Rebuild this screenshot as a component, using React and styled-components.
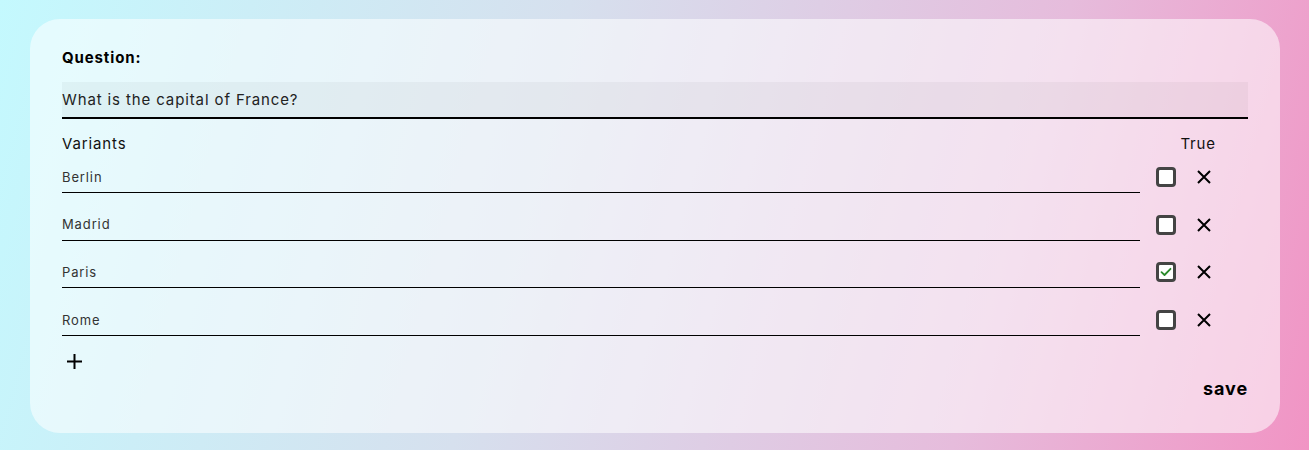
import styled, { createGlobalStyle } from 'styled-components';
import { useState } from 'react';

const GlobalStyle = createGlobalStyle`
  html, body {
    margin: 0;
    padding: 0;
  }
  body {
    font-family: Inter, 'Noto Sans', sans-serif;
    letter-spacing: 0.055em;
    color: #111;
  }
`;

const Page = styled.div`
  width: 100%;
  height: 450px;
  box-sizing: border-box;
  padding: 19px 29px 17px 30px;
  background: linear-gradient(105deg, #c4f9fe 0%, #d6e0ee 40%, #e6bcdc 75%, #f194c4 100%);
`;

const Card = styled.div`
  height: 100%;
  box-sizing: border-box;
  padding: 30px 32px 32px;
  border-radius: 30px;
  background: rgba(255, 255, 255, 0.55);
  display: flex;
  flex-direction: column;
`;

const Label = styled.div`
  font-size: 15px;
  font-weight: 700;
  line-height: 18px;
  color: #000;
`;

const QuestionInput = styled.input`
  margin-top: 15px;
  height: 37px;
  box-sizing: border-box;
  border: none;
  border-bottom: 2px solid #000;
  background: rgba(0, 0, 0, 0.035);
  padding: 0;
  font-family: inherit;
  letter-spacing: inherit;
  font-size: 15px;
  color: #222;
  outline: none;
`;

const Header = styled.div`
  display: flex;
  justify-content: space-between;
  align-items: center;
  margin-top: 15px;
  font-size: 15px;
  line-height: 20px;
  color: #111;
`;

const TrueLabel = styled.span`
  margin-right: 32px;
`;

const List = styled.div`
  display: flex;
  flex-direction: column;
  gap: 15.7px;
  margin-top: 7px;
`;

const Row = styled.div`
  display: flex;
  align-items: center;
`;

const VariantInput = styled.input`
  flex: 1;
  height: 32px;
  box-sizing: border-box;
  border: none;
  border-bottom: 1px solid #000;
  background: transparent;
  padding: 0;
  font-family: inherit;
  letter-spacing: inherit;
  font-size: 13px;
  color: #333;
  outline: none;
`;

const Controls = styled.div`
  width: 108px;
  display: flex;
  align-items: center;
  padding-left: 16px;
  box-sizing: border-box;
  gap: 20px;
`;

const Check = styled.button`
  width: 20px;
  height: 20px;
  box-sizing: border-box;
  border: 3px solid #444;
  border-radius: 4px;
  background: #fff;
  padding: 0;
  display: flex;
  align-items: center;
  justify-content: center;
  cursor: pointer;
`;

const IconButton = styled.button`
  border: none;
  background: none;
  padding: 0;
  display: flex;
  cursor: pointer;
  color: #000;
`;

const AddButton = styled(IconButton)`
  align-self: flex-start;
  margin-top: 17px;
  margin-left: 4px;
`;

const Save = styled.button`
  align-self: flex-end;
  margin-top: 8px;
  border: none;
  background: none;
  padding: 0;
  font-family: inherit;
  letter-spacing: inherit;
  font-size: 18px;
  line-height: 22px;
  font-weight: 700;
  color: #000;
  cursor: pointer;
`;

const CheckMark = () => (
  <svg width="12" height="10" viewBox="0 0 12 10">
    <path d="M1.5 5.2 L4.5 8 L10.5 1.8" fill="none" stroke="#2b8a2b" strokeWidth="1.8" strokeLinecap="round" strokeLinejoin="round" />
  </svg>
);

const Cross = () => (
  <svg width="16" height="16" viewBox="0 0 16 16">
    <path d="M2 2 L14 14 M14 2 L2 14" stroke="#000" strokeWidth="2" />
  </svg>
);

const Plus = () => (
  <svg width="17" height="17" viewBox="0 0 17 17">
    <path d="M8.5 1 V16 M1 8.5 H16" stroke="#000" strokeWidth="2" />
  </svg>
);

const App = () => {
  const [variants, setVariants] = useState([
    { text: 'Berlin', correct: false },
    { text: 'Madrid', correct: false },
    { text: 'Paris', correct: true },
    { text: 'Rome', correct: false },
  ]);

  const toggle = (i) =>
    setVariants(variants.map((v, j) => (j === i ? { ...v, correct: !v.correct } : v)));

  return (
    <Page>
      <GlobalStyle />
      <Card>
        <Label>Question:</Label>
        <QuestionInput defaultValue="What is the capital of France?" />
        <Header>
          <span>Variants</span>
          <TrueLabel>True</TrueLabel>
        </Header>
        <List>
          {variants.map((v, i) => (
            <Row key={i}>
              <VariantInput defaultValue={v.text} />
              <Controls>
                <Check onClick={() => toggle(i)}>{v.correct && <CheckMark />}</Check>
                <IconButton>
                  <Cross />
                </IconButton>
              </Controls>
            </Row>
          ))}
        </List>
        <AddButton>
          <Plus />
        </AddButton>
        <Save>save</Save>
      </Card>
    </Page>
  );
};

export default App;
